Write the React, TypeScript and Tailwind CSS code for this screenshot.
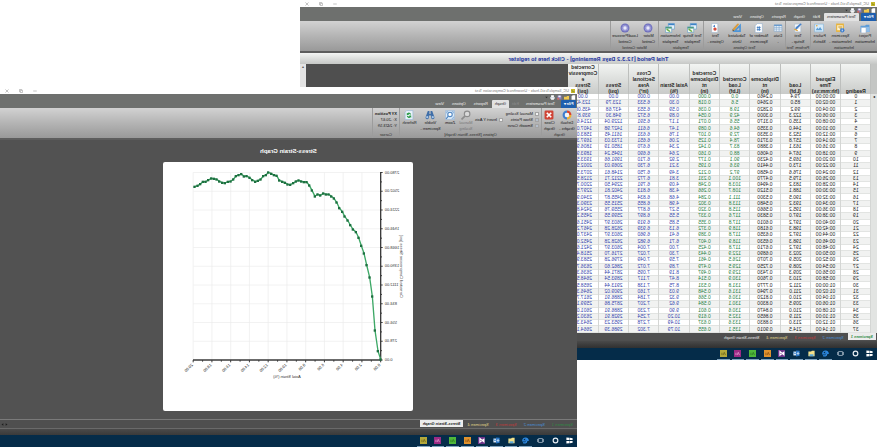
// Geotechnical testing desktop: the data grid window with the graph window
// stacked over it. The whole desktop is flipped horizontally.

import type { ReactNode } from 'react';

const LOADS = [
  79.4, 85.0, 99.2, 122.3, 135.0, 144.0, 152.3, 157.8, 163.1, 167.4, 169.5, 173.0, 176.6, 179.5, 183.2, 188.1, 190.5,
  193.2, 195.2, 197.0, 197.2, 198.3, 197.2, 198.3, 197.2, 202.3, 205.9, 208.9, 209.3, 210.3, 211.2, 211.0, 210.0,
  209.5, 210.0, 211.9, 213.0, 214.5,
];

const DISPLACEMENTS = [
  0.246, 0.264, 0.282, 0.3, 0.317, 0.335, 0.353, 0.371, 0.388, 0.406, 0.423, 0.441, 0.458, 0.477, 0.494, 0.512, 0.53,
  0.548, 0.566, 0.583, 0.601, 0.618, 0.635, 0.653, 0.671, 0.689, 0.707, 0.725, 0.743, 0.76, 0.777, 0.794, 0.812, 0.83,
  0.847, 0.865, 0.883, 0.901,
];

const HEADERS = [
  ['Reading'],
  ['Elapsed', 'Time', '(hh:mm:ss)'],
  ['Load', '(Lbf)'],
  ['Displaceme', 'nt', '(in)'],
  ['Corrected', 'Load', '(Lbf)'],
  ['Corrected', 'Displaceme', 'nt', '(in)'],
  ['Axial Strain', '(%)'],
  ['Cross', 'Sectional', 'Area', '(in²)'],
  ['Stress', '(psi)'],
  ['Corrected', 'Compressiv', 'e', 'Stress', '(psi)'],
];

const CELL_COLORS = [
  'text-[#222222]',
  'text-[#222222]',
  'text-[#222222]',
  'text-[#222222]',
  'text-[#1f8044]',
  'text-[#1f8044]',
  'text-[#3444ac]',
  'text-[#3444ac]',
  'text-[#3444ac]',
  'text-[#3444ac]',
];

const pad = (n: number) => String(n).padStart(2, '0');

function toRow(load: number, i: number) {
  const corrLoad = load - LOADS[0];
  const corrDisp = DISPLACEMENTS[i] - DISPLACEMENTS[0];
  const strain = corrDisp / 6.07;
  const stress = corrLoad * 22.105;
  return [
    String(i),
    `${pad(Math.floor((i * 2) / 60))}:${pad((i * 2) % 60)}:00`,
    load.toFixed(1),
    DISPLACEMENTS[i].toFixed(4),
    corrLoad.toFixed(1),
    corrDisp.toFixed(3),
    (strain * 100).toFixed(2),
    i === 0 ? '0.000' : (6.514 / (1 - strain)).toFixed(3),
    stress.toFixed(2),
    (stress * (1 - strain)).toFixed(2),
  ];
}

const ROWS = LOADS.map(toRow);

// Curve points in chart units, origin of strain first.
const CURVE: [number, number][] = [
  [97, 592], [105, 567], [114, 505], [122, 403], [130, 346], [139, 309], [147, 274], [155, 251], [163, 227],
  [171, 210], [180, 202], [188, 189], [196, 175], [205, 163], [212, 149], [221, 138], [229, 121], [237, 109],
  [245, 103], [253, 97], [261, 97], [269, 94], [278, 100], [286, 97], [294, 103], [303, 85], [311, 70],
  [319, 60], [327, 60], [335, 58], [343, 55], [351, 58], [359, 63], [368, 68], [376, 67], [384, 62],
  [392, 59], [401, 55], [409, 41], [417, 39], [425, 35], [434, 31], [441, 39], [449, 42], [457, 52],
  [465, 56], [473, 59], [482, 54], [490, 47], [499, 42], [507, 43], [515, 36], [523, 39], [531, 42],
  [539, 52], [547, 58], [555, 59], [564, 63], [572, 62], [581, 58], [589, 52], [597, 50], [605, 49],
  [614, 54], [622, 59], [630, 59], [638, 66], [646, 71], [655, 74],
];

const TICKS = [0, 1, 2, 3, 4, 5, 6, 7, 8, 9, 10];

/* ---------- icons ---------- */

function Glyph({ children, size = 'size-[10px]' }: { children: ReactNode; size?: string }) {
  return (
    <svg viewBox="0 0 18 18" className={`${size} shrink-0`} aria-hidden="true">
      {children}
    </svg>
  );
}

const ProjectIcon = (
  <Glyph>
    <path d="M1 3h6l2 2h8v11H1z" fill="#5b9bd9" />
    <path d="M1 7h16v9H1z" fill="#8dbdeb" />
    <path d="M7 8h7l2 2v8H7z" fill="#ffffff" stroke="#8aa5c4" />
  </Glyph>
);

const SpecimenIcon = (
  <Glyph>
    <path d="M2 1h14v15H2z" fill="#e9b43b" />
    <path d="M4 4h10v9H4z" fill="#fff4d0" />
    <path d="M5 6h7M5 8h7M5 10h5" stroke="#c08a20" />
    <circle cx="5" cy="13" r="4" fill="#3c7ed0" />
    <path d="M5 12v3M5 10v1" stroke="#ffffff" strokeWidth="1.5" />
  </Glyph>
);

const SketchIcon = (
  <Glyph>
    <path d="M1 2h16v14H1z" fill="#d8ecfa" stroke="#7fb0d8" />
    <path d="M3 13l4-6 3 4 2-3 3 5z" fill="#5da0d8" />
    <circle cx="13" cy="5" r="1.5" fill="#e3a73c" />
  </Glyph>
);

const SetupIcon = (
  <Glyph>
    <path d="M4 2h11v14H4z" fill="#ffffff" stroke="#9db4cc" />
    <path d="M6 6h7M6 9h7" stroke="#9db4cc" />
    <path d="M2 2l10 10 2-1-1-3L5 1z" fill="#4781c9" />
    <path d="M9 13l6-3 1 2-6 3z" fill="#e0a030" />
  </Glyph>
);

const DataIcon = (
  <Glyph>
    <path d="M2 4h14v11H2z" fill="#e7f1fa" stroke="#7fa4c8" />
    <path d="M2 8h14M2 11h14M7 4v11M12 4v11" stroke="#7fa4c8" />
    <path d="M2 3h14v2H2z" fill="#5590cc" />
  </Glyph>
);

const NumberIcon = (
  <Glyph>
    <path d="M3 1h9l4 4v12H3z" fill="#ffffff" stroke="#8faccb" />
    <path d="M6 8h7M6 12h7M8 6v8M11 6v8" stroke="#3f7cc2" strokeWidth="1.5" />
  </Glyph>
);

const UnitsIcon = (
  <Glyph>
    <path d="M2 1v15h15z" fill="#4c94d8" />
    <path d="M5 8v5h5z" fill="#bfbfbf" />
    <path d="M5 2l3-1 9 10-3 3z" fill="#d99c3f" />
    <path d="M14 14l3-3v4z" fill="#6a4d2a" />
  </Glyph>
);

const OptionsIcon = (
  <Glyph>
    <path d="M4 1h11v16H4z" fill="#ffffff" stroke="#9db4cc" />
    <circle cx="9" cy="11" r="3" fill="#d64b3c" />
    <path d="M9 3l4 3-4 2z" fill="#4781c9" />
  </Glyph>
);

const TemplateIcon = (
  <Glyph>
    <path d="M1 1h11v10H1z" fill="#e8f3fb" stroke="#5794c8" />
    <path d="M1 1h11v3H1z" fill="#3f83c6" />
    <path d="M6 7h11v10H6z" fill="#f5faf0" stroke="#5794c8" />
    <path d="M6 7h11v3H6z" fill="#4a9a83" />
    <path d="M8 15l6-5 2 2-6 4z" fill="#6ab04a" />
  </Glyph>
);

const MotorIcon = (
  <Glyph>
    <circle cx="9" cy="9" r="8" fill="#6e6ebc" />
    <circle cx="9" cy="9" r="6" fill="#9d9dd8" />
    <circle cx="9" cy="9" r="6" fill="none" stroke="#7c7cc6" strokeWidth="2" strokeDasharray="2 2" />
    <circle cx="9" cy="9" r="3" fill="#e8e8fa" />
  </Glyph>
);

const GraphsIcon = (
  <Glyph>
    <path d="M9 1a8 8 0 0 1 8 8h-4a4 4 0 0 0-4-4z" fill="#3f7fd0" />
    <path d="M17 9a8 8 0 0 1-8 8v-4a4 4 0 0 0 4-4z" fill="#3f7fd0" />
    <path d="M9 17a8 8 0 0 1-8-8h4a4 4 0 0 0 4 4z" fill="#f0b030" />
    <path d="M1 9a8 8 0 0 1 8-8v4a4 4 0 0 0-4 4z" fill="#d9442f" />
    <circle cx="9" cy="9" r="4" fill="#f4f4f4" />
  </Glyph>
);

const CloseIcon = (
  <Glyph>
    <rect x="1" y="1" width="16" height="16" rx="2" fill="#cf4335" />
    <path d="M5 5l8 8M13 5l-8 8" stroke="#ffffff" strokeWidth="3" />
  </Glyph>
);

const MagnifierIcon = (
  <Glyph>
    <circle cx="7" cy="7" r="5" fill="#d9d9d9" stroke="#8c8c8c" strokeWidth="2" />
    <path d="M11 11l6 6" stroke="#8c8c8c" strokeWidth="3" />
  </Glyph>
);

const ZoomIcon = (
  <Glyph>
    <path d="M1 1h16v16H1z" fill="#dcebf8" stroke="#8fb2d6" />
    <circle cx="9" cy="8" r="4" fill="#ffffff" stroke="#4f86c2" strokeWidth="2" />
    <path d="M12 11l4 5" stroke="#4f86c2" strokeWidth="2" />
    <path d="M3 6V3h3M12 3h3v3M3 12v3h3" stroke="#4f86c2" fill="none" />
  </Glyph>
);

const BinocularsIcon = (
  <Glyph>
    <path d="M5 2h3v5h2V2h3l4 11a3 3 0 0 1-6 1v-4H7v4a3 3 0 0 1-6-1z" fill="#3f6ea8" />
    <circle cx="4" cy="13" r="2" fill="#a9c8ea" />
    <circle cx="14" cy="13" r="2" fill="#a9c8ea" />
  </Glyph>
);

const RefreshIcon = (
  <Glyph>
    <path d="M2 1h11l3 3v13H2z" fill="#eaf3fb" stroke="#8fb2d6" />
    <path d="M5 8a4 4 0 0 1 7-2l1-1v4H9l1-1a2 2 0 0 0-3 0z" fill="#2f9c4a" />
    <path d="M13 10a4 4 0 0 1-7 3l-1 1v-4h4l-1 1a2 2 0 0 0 3 0z" fill="#2f9c4a" />
  </Glyph>
);

/* ---------- window chrome ---------- */

function TitleBar() {
  return (
    <div className="flex h-[7px] items-center bg-white pl-[2px] pr-[5px] text-[#808080]">
      <Glyph size="size-[4px]">
        <path d="M0 0h18v18H0z" fill="#c9b92c" />
        <path d="M4 10l4 4 6-9" stroke="#6c7a1c" strokeWidth="3" fill="none" />
      </Glyph>
      <span className="ml-[2px] font-[Lato,sans-serif] text-[4px] leading-[6px]">
        UC_SampleTest1.hsdx - Unconfined Compression Test
      </span>
      <div className="ml-auto flex gap-[10px]">
        <button type="button" aria-label="Minimize" className="flex">
          <Glyph size="size-[4px]">
            <path d="M1 9h16" stroke="#a6a6a6" strokeWidth="3" />
          </Glyph>
        </button>
        <button type="button" aria-label="Restore" className="flex">
          <Glyph size="size-[4px]">
            <path d="M2 6h10v10H2zM6 6V2h10v10h-4" stroke="#a6a6a6" strokeWidth="3" fill="none" />
          </Glyph>
        </button>
        <button type="button" aria-label="Close" className="flex">
          <Glyph size="size-[4px]">
            <path d="M2 2l14 14M16 2L2 16" stroke="#a6a6a6" strokeWidth="3" />
          </Glyph>
        </button>
      </div>
    </div>
  );
}

function QuickAccess() {
  return (
    <div className="flex h-[6px] items-center gap-[2px] pl-[1px]">
      <Glyph size="size-[5px]">
        <path d="M3 1h9l4 4v12H3z" fill="#ffffff" />
      </Glyph>
      <Glyph size="size-[5px]">
        <path d="M0 4h7l2 2h9v10H0z" fill="#f1c94f" />
      </Glyph>
      <Glyph size="size-[5px]">
        <path d="M2 2h14v14H2z" fill="#8a7fc4" />
        <path d="M5 2h8v6H5z" fill="#f3f3fa" />
        <path d="M10 10h7v7h-7z" fill="#cf6a5d" />
      </Glyph>
      <Glyph size="size-[5px]">
        <path d="M1 7h16v7H1z" fill="#d9dee6" />
        <path d="M4 1h10v6H4zM4 12h10v5H4z" fill="#ffffff" />
      </Glyph>
      <Glyph size="size-[3px]">
        <path d="M2 5h14l-7 9z" fill="#2c2c2c" />
      </Glyph>
    </div>
  );
}

const MENU = ['Test Parameters', 'Edit', 'Graph', 'Reports', 'Options', 'View'];

function MenuTabs({ active, disabled }: { active: string; disabled?: string }) {
  return (
    <div className="flex h-[8px] items-stretch pl-[1px] text-[4px] leading-[8px] text-[#f0f0f0]">
      <button type="button" className="mr-[2px] w-[15px] rounded-t-[1px] bg-[#1f5fae] font-bold text-white">
        File ▾
      </button>
      {MENU.map((name) => (
        <button
          key={name}
          type="button"
          disabled={name === disabled}
          className={
            name === active
              ? 'rounded-t-[1px] bg-[#e2e2e2] px-[3px] text-[#1f1f1f]'
              : name === disabled
                ? 'px-[3px] text-[#8c8c8c]'
                : 'px-[4px]'
          }
        >
          {name}
        </button>
      ))}
    </div>
  );
}

function Ribbon({ children }: { children: ReactNode }) {
  return (
    <div className="flex h-[32px] border-b-2 border-[#5d5d5d] bg-linear-to-b from-[#d2d2d2] via-[#b4b4b4] to-[#999999] text-[4px] leading-[6px] text-[#161616]">
      {children}
    </div>
  );
}

function Group({ label, children }: { label: string; children: ReactNode }) {
  return (
    <div className="flex shrink-0 flex-col border-r border-[#9c9c9c]">
      <div className="flex h-[24px]">{children}</div>
      <p className="whitespace-nowrap text-center text-[#2c2c2c]">{label}</p>
    </div>
  );
}

interface ToolProps {
  icon: ReactNode;
  lines: string[];
  width: string;
  dim?: boolean;
}

function Tool({ icon, lines, width, dim }: ToolProps) {
  return (
    <button
      type="button"
      disabled={dim}
      className={`flex shrink-0 flex-col items-center whitespace-nowrap pt-[2px] ${width} ${dim ? 'text-[#787878]' : ''}`}
    >
      {icon}
      {lines.map((line) => (
        <span key={line}>{line}</span>
      ))}
    </button>
  );
}

function CheckItem({ label, checked }: { label: string; checked?: boolean }) {
  return (
    <label className="flex items-center gap-[2px] whitespace-nowrap">
      <input
        type="checkbox"
        defaultChecked={checked}
        className="size-[4px] appearance-none border border-[#a4a4a4] bg-[#f2f2f2] checked:bg-[#b5bfcc]"
      />
      {label}
    </label>
  );
}

const SHEETS = [
  { name: 'Specimen 1', color: 'text-[#2f8b45]' },
  { name: 'Specimen 2', color: 'text-[#4a90d9]' },
  { name: 'Specimen 3', color: 'text-[#c03a3a]' },
  { name: 'Specimen 4', color: 'text-[#e0d68a]' },
  { name: 'Stress-Strain Graph', color: 'text-[#f0f0f0]' },
];

function SheetTabs({ active, scroll }: { active: string; scroll?: boolean }) {
  return (
    <div className="flex h-[8px] gap-[1px] bg-[#4f4f4f] pl-[1px] text-[4px] leading-[7px]">
      {SHEETS.map(({ name, color }) => (
        <button
          key={name}
          type="button"
          className={
            name === active
              ? `mb-[1px] bg-[#ececec] px-[3px] font-bold ${name === 'Stress-Strain Graph' ? 'text-[#222222]' : color}`
              : `px-[3px] ${color}`
          }
        >
          {name}
        </button>
      ))}
      {scroll && (
        <div className="ml-auto flex items-center gap-[1px] pr-[1px]">
          <button type="button" aria-label="Scroll sheets left" className="flex">
            <Glyph size="size-[3px]">
              <path d="M14 1v16L3 9z" fill="#1c1c1c" />
            </Glyph>
          </button>
          <button type="button" aria-label="Scroll sheets right" className="flex">
            <Glyph size="size-[3px]">
              <path d="M4 1v16l11-8z" fill="#1c1c1c" />
            </Glyph>
          </button>
        </div>
      )}
    </div>
  );
}

const APPS = [
  {
    name: 'Start',
    open: false,
    art: <path d="M1 3l7-1v6H1zM9 2l8-1v7H9zM1 10h7v6l-7-1zM9 10h8v7l-8-1z" fill="#ffffff" />,
  },
  { name: 'Search', open: false, art: <circle cx="9" cy="9" r="6" fill="none" stroke="#e8eef4" strokeWidth="3" /> },
  {
    name: 'Task View',
    open: false,
    art: <path d="M4 4h10v10H4zM1 5v8M17 5v8" fill="none" stroke="#aebccb" strokeWidth="2" />,
  },
  {
    name: 'Edge',
    open: true,
    art: (
      <path d="M2 10C2 0 16 0 16 10H6c0 6 6 6 9 4M2 10c2-4 5-5 8-4" fill="none" stroke="#2f8be6" strokeWidth="3" />
    ),
  },
  {
    name: 'Explorer',
    open: true,
    art: (
      <>
        <path d="M1 2h7l2 2h7v12H1z" fill="#f3e08a" />
        <path d="M4 11h10v5H4z" fill="#5aa8dc" />
      </>
    ),
  },
  {
    name: 'Outlook',
    open: true,
    art: (
      <>
        <path d="M8 4h9v10H8z" fill="#d8e8f8" />
        <path d="M8 5l5 5 4-5" stroke="#2a78c8" strokeWidth="2" fill="none" />
        <path d="M1 2l9-1v16l-9-2z" fill="#2a78c8" />
        <circle cx="5" cy="9" r="2" fill="none" stroke="#ffffff" strokeWidth="2" />
      </>
    ),
  },
  {
    name: 'Visual Studio',
    open: true,
    art: (
      <>
        <path d="M0 0h18v18H0z" fill="#6d3488" />
        <path d="M3 6l10 7V4L3 12z" fill="none" stroke="#ffffff" strokeWidth="3" />
      </>
    ),
  },
];

const ADOBE = [
  { name: 'Ai', fill: '#e0922e', ink: '#8a5010' },
  { name: 'Dw', fill: '#4fb83a', ink: '#2c7a20' },
  { name: 'Id', fill: '#9c2a84', ink: '#e0a0d0' },
  { name: 'Br', fill: '#b3a83a', ink: '#6c6418' },
];

function Taskbar() {
  return (
    <div className="h-[12px] bg-[#052c49]">
      <div className="flex h-full w-[161px]">
        {APPS.map(({ name, open, art }) => (
          <button
            key={name}
            type="button"
            aria-label={name}
            className={`mx-[1px] flex flex-1 items-center justify-center border-b ${open ? 'border-[#7fa3bf]' : 'border-transparent'}`}
          >
            <Glyph size="size-[7px]">{art}</Glyph>
          </button>
        ))}
        {ADOBE.map(({ name, fill, ink }) => (
          <button
            key={name}
            type="button"
            aria-label={name}
            className="mx-[1px] flex flex-1 items-center justify-center border-b border-[#7fa3bf]"
          >
            <Glyph size="size-[7px]">
              <path d="M0 0h18v18H0z" fill={fill} />
              <path d="M4 13l3-7 3 7M13 7v6" stroke={ink} strokeWidth="2" fill="none" />
            </Glyph>
          </button>
        ))}
      </div>
    </div>
  );
}

/* ---------- data window ---------- */

function DataGrid() {
  return (
    <table className="h-full w-[309px] table-fixed border-collapse bg-white text-center text-[5px] leading-[6px]">
      <thead>
        <tr className="h-[30px] bg-linear-to-b from-[#f2f4f2] to-[#c9cbc9]">
          <th className="w-[6px] bg-[#c4c6c4] p-0" aria-label="Row selector" />
          {HEADERS.map((lines) => (
            <th
              key={lines.join(' ')}
              className="whitespace-nowrap border-l border-[#bdbfbd] p-0 align-bottom font-bold text-[#1f1f1f]"
            >
              {lines.map((line) => (
                <span key={line} className="-mx-1 block">
                  {line}
                </span>
              ))}
            </th>
          ))}
        </tr>
      </thead>
      <tbody>
        {ROWS.map((row, i) => (
          <tr key={row[0]} className="border-b border-[#e2e4e2] odd:bg-white even:bg-[#f1f2f1]">
            <td className="bg-[#e2e4e2] p-0 text-[4px] leading-[4px] text-black">{i === 0 ? '▸' : ''}</td>
            {row.map((value, c) => (
              <td key={c} className={`border-l border-[#d4d6d4] p-0 leading-[5px] ${CELL_COLORS[c]}`}>
                {value}
              </td>
            ))}
          </tr>
        ))}
      </tbody>
    </table>
  );
}

function DataWindow() {
  return (
    <section
      aria-label="Test data"
      className="absolute top-0 right-[300px] bottom-[87px] left-0 flex flex-col overflow-hidden bg-[#4f4f4f]"
    >
      <TitleBar />
      <div className="bg-[#6e706e]">
        <QuickAccess />
        <MenuTabs active="Test Parameters" />
      </div>
      <Ribbon>
        <Group label="Information">
          <Tool icon={ProjectIcon} lines={['Project', 'Information']} width="w-[24px]" />
          <Tool icon={SpecimenIcon} lines={['Specimen', 'Information -']} width="w-[25px]" />
          <Tool icon={SketchIcon} lines={['Failure', 'Sketch']} width="w-[17px]" />
        </Group>
        <Group label="Perform Test">
          <Tool icon={SetupIcon} lines={['Test', 'Setup -']} width="w-[24px]" />
        </Group>
        <Group label="Test Options">
          <Tool icon={DataIcon} lines={['Data', '-']} width="w-[14px]" />
          <Tool icon={NumberIcon} lines={['Number of', 'Specimen']} width="w-[24px]" />
          <Tool icon={UnitsIcon} lines={['Tabulated', 'Units']} width="w-[20px]" />
          <Tool icon={OptionsIcon} lines={['Test', 'Options -']} width="w-[23px]" />
        </Group>
        <Group label="Template">
          <Tool icon={TemplateIcon} lines={['Test Setup', 'Template']} width="w-[21px]" />
          <Tool icon={TemplateIcon} lines={['Information', 'Template']} width="w-[23px]" />
        </Group>
        <Group label="Motor Control">
          <Tool icon={MotorIcon} lines={['Motor', 'Control']} width="w-[19px]" />
          <Tool icon={MotorIcon} lines={['Load/Pressure', 'Control']} width="w-[28px]" />
        </Group>
      </Ribbon>
      <a
        href="#register"
        className="block h-[11px] bg-linear-to-b from-[#f4f5f4] to-[#c6c8c6] text-center font-[Roboto,sans-serif] text-[6px] leading-[12px] font-bold text-[#2a3aa0]"
      >
        Trial Period [12.3.2 Days Remaining] - Click here to register
      </a>
      <div className="flex min-h-0 flex-1">
        <DataGrid />
        <div className="ml-auto w-[6px] bg-[#e4e4e4] text-center text-[4px] leading-[6px] text-[#555555]">▴</div>
      </div>
      <SheetTabs active="Specimen 1" />
      <div className="h-[7px] bg-linear-to-b from-[#4a4a4a] to-[#303030]" />
      <Taskbar />
    </section>
  );
}

/* ---------- graph window ---------- */

function StressStrainChart() {
  return (
    <svg
      viewBox="0 0 750 747"
      className="h-[249px] w-[250px] rounded-[2px] bg-white"
      role="img"
      aria-label="Stress-Strain Graph"
      fontFamily="Liberation Sans, Arial, sans-serif"
      fontSize="12"
      fill="#2f2f2f"
    >
      {TICKS.map((t) => (
        <g key={t}>
          <path d={`M97 ${594 - t * 56.25}h562M${97 + t * 56.25} 31v563`} stroke="#ebebeb" strokeWidth="2" />
          <text x="85" y={597 - t * 56.25} textAnchor="end">
            {(t * 278).toFixed(2)}
          </text>
          <text transform={`translate(${97 + t * 56.25} 610) rotate(45)`}>{(t * 2).toFixed(2)}</text>
        </g>
      ))}
      <path d="M97 30v564h563" fill="none" stroke="#3c3c3c" strokeWidth="4" />
      {TICKS.map((t) => (
        <path
          key={t}
          d={`M91 ${594 - t * 56.25}h6M${97 + t * 56.25} 594v7${t < 10 ? `M93 ${566 - t * 56.25}h4M${125 + t * 56.25} 594v5` : ''}`}
          stroke="#3c3c3c"
          strokeWidth="3"
        />
      ))}
      <polyline
        points={CURVE.map((p) => p.join(',')).join(' ')}
        fill="none"
        stroke="#3da866"
        strokeWidth="4"
        strokeLinejoin="round"
      />
      {CURVE.map(([x, y]) => (
        <rect key={x} x={x - 3} y={y - 3} width="7" height="7" fill="#1d7040" />
      ))}
      <text x="378" y="649" textAnchor="middle">
        Axial Strain (%)
      </text>
      <text transform="translate(38 313) rotate(-90)" textAnchor="middle">
        Corrected Compressive Stress [psi]
      </text>
    </svg>
  );
}

function GraphWindow() {
  return (
    <section
      aria-label="Graph"
      className="absolute top-[87px] right-0 bottom-0 left-[300px] flex flex-col overflow-hidden bg-[#525252]"
    >
      <TitleBar />
      <div className="bg-[#6e706e]">
        <QuickAccess />
        <MenuTabs active="Graph" disabled="Edit" />
      </div>
      <Ribbon>
        <Group label="Graph">
          <Tool icon={GraphsIcon} lines={['Default', 'Graphs -']} width="w-[20px]" />
          <Tool icon={CloseIcon} lines={['Close', 'Graph']} width="w-[15px]" />
        </Group>
        <Group label="Options [Stress-Strain Graph]">
          <div className="flex w-[37px] flex-col justify-center pl-[2px]">
            <CheckItem label="Manual Scaling" />
            <CheckItem label="Show Points" checked />
            <CheckItem label="Smooth Curve" checked />
          </div>
          <div className="flex w-[30px] items-center pl-[1px]">
            <CheckItem label="Invert Y Axis" />
          </div>
          <Tool icon={MagnifierIcon} lines={['Manual', 'Scaling']} width="w-[16px]" dim />
          <Tool icon={ZoomIcon} lines={['Zoom']} width="w-[16px]" />
          <Tool icon={BinocularsIcon} lines={['Visible', 'Specimen -']} width="w-[23px]" />
          <Tool icon={RefreshIcon} lines={['Refresh']} width="w-[19px]" />
        </Group>
        <Group label="Cursor">
          <div className="flex w-[26px] flex-col justify-center whitespace-nowrap pl-[2px]">
            <b>XY Position</b>
            <span>X: -20.67</span>
            <span>Y: 2423.59</span>
          </div>
        </Group>
      </Ribbon>
      <div className="flex min-h-0 flex-1 flex-col items-center">
        <h1 className="pt-[6px] pb-[6px] text-[6px] leading-[10px] font-bold text-white">Stress-Strain Graph</h1>
        <StressStrainChart />
      </div>
      <div className="border-t border-[#7a7a7a]">
        <SheetTabs active="Stress-Strain Graph" scroll />
      </div>
      <div className="h-[7px] border-t border-[#6a6a6a] bg-linear-to-b from-[#4a4a4a] to-[#3a3a3a]" />
      <Taskbar />
    </section>
  );
}

export default function App() {
  return (
    <main className="relative h-screen -scale-x-100 overflow-hidden bg-white font-['Liberation_Sans',Arial,sans-serif]">
      <DataWindow />
      <GraphWindow />
    </main>
  );
}
